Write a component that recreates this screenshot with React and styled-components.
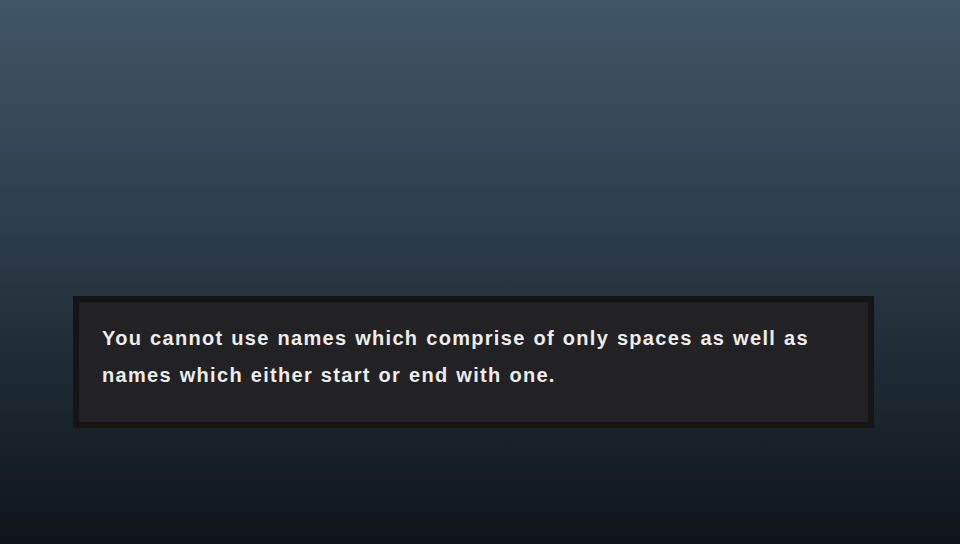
import React from "react";
import styled, { createGlobalStyle } from "styled-components";

const Global = createGlobalStyle`
  html, body { margin: 0; padding: 0; }
  body { width: 960px; height: 544px; overflow: hidden; }
`;

const Screen = styled.div`
  width: 960px;
  height: 544px;
  box-sizing: border-box;
  background: linear-gradient(180deg, #405667 0%, #2e3e4b 40%, #1d2932 70%, #11171e 95%, #10141a 100%);
  padding: 296px 86px 0 73px;
  font-family: "Liberation Sans", Arial, sans-serif;
`;

const MessageBox = styled.div`
  box-sizing: border-box;
  width: 801px;
  height: 132px;
  border: 6px solid #151516;
  background: #222224;
  padding: 18px 23px 0 23px;
`;

const Message = styled.p`
  margin: 0;
  color: #ececec;
  font-weight: 700;
  font-size: 20px;
  line-height: 37px;
  letter-spacing: 1.3px;
  word-spacing: 1px;
`;

export default function App() {
  return (
    <>
      <Global />
      <Screen>
        <MessageBox>
          <Message>
            You cannot use names which comprise of only spaces as well as
            <br />
            names which either start or end with one.
          </Message>
        </MessageBox>
      </Screen>
    </>
  );
}
